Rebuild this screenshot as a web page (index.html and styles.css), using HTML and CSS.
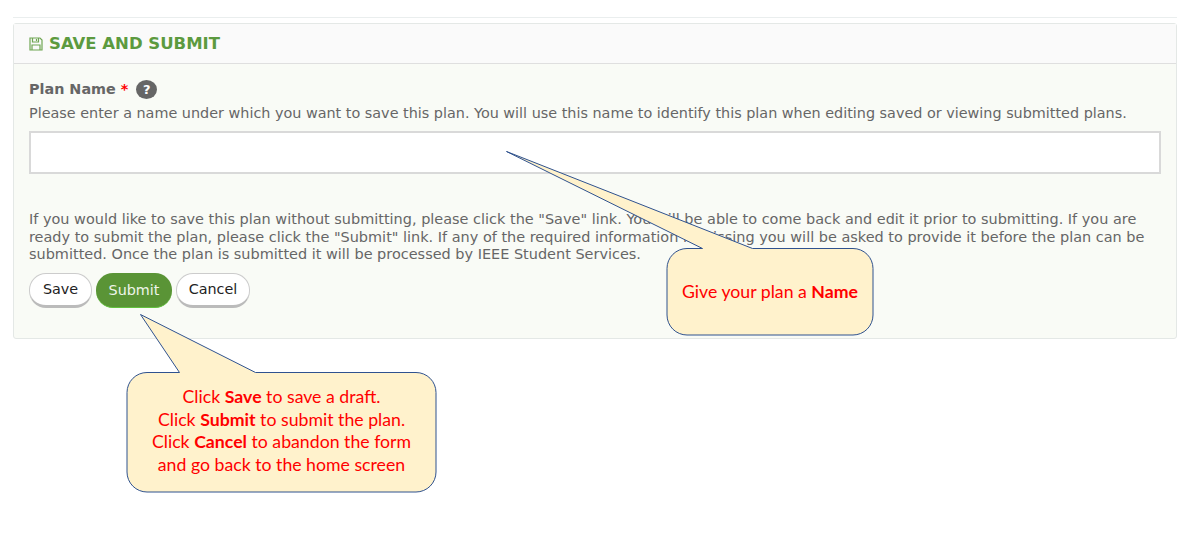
FILE: index.html
```html
<!DOCTYPE html>
<html lang="en">
<head>
  <meta charset="UTF-8" />
  <title>Save and Submit</title>
  <link rel="stylesheet" href="styles.css">
</head>
<body>
  <div class="top-rule"></div>

  <section class="panel">
    <header class="panel-head">
      <svg class="save-icon" width="14" height="14" viewBox="0 0 14 14" fill="none" stroke="#6fa653" stroke-width="1.2">
        <path d="M1 1h10l2 2v10H1z"/>
        <path d="M3.5 1v4h6V1M7.5 2v2"/>
        <path d="M3 13V8h8v5"/>
      </svg>
      <h2>SAVE AND SUBMIT</h2>
    </header>
    <div class="panel-body">
      <div class="label-row">
        <label for="planName">Plan Name</label>
        <span class="req">*</span>
        <span class="help">?</span>
      </div>
      <p class="hint">Please enter a name under which you want to save this plan. You will use this name to identify this plan when editing saved or viewing submitted plans.</p>
      <input type="text" id="planName" class="name-input" />
      <p class="note">If you would like to save this plan without submitting, please click the "Save" link. You will be able to come back and edit it prior to submitting. If you are ready to submit the plan, please click the "Submit" link. If any of the required information is missing you will be asked to provide it before the plan can be submitted. Once the plan is submitted it will be processed by IEEE Student Services.</p>
      <div class="actions">
        <button class="btn btn-save">Save</button>
        <button class="btn btn-submit">Submit</button>
        <button class="btn btn-cancel">Cancel</button>
      </div>
    </div>
  </section>

  <!-- callouts sit over the form -->
  <div class="callout callout-name">
    <svg width="369" height="186" viewBox="0 0 369 186">
      <path class="bubble" d="M0.5 0.5L246.5 97.5H347a20 20 0 0 1 20 20V164a20 20 0 0 1-20 20H181a20 20 0 0 1-20-20V117.5a20 20 0 0 1 20-20H196.5Z" />
    </svg>
    <div class="callout-text name-text">Give your plan a <b>Name</b></div>
  </div>

  <div class="callout callout-buttons">
    <svg width="298" height="180" viewBox="0 0 298 180">
      <path class="bubble" d="M0.5 0.5L115.5 58.5H276a20 20 0 0 1 20 20V158a20 20 0 0 1-20 20H7a20 20 0 0 1-20-20V78.5a20 20 0 0 1 20-20H39.5Z" />
    </svg>
    <div class="callout-text buttons-text">
      Click <b>Save</b> to save a draft.<br>
      Click <b>Submit</b> to submit the plan.<br>
      Click <b>Cancel</b> to abandon the form<br>
      and go back to the home screen
    </div>
  </div>
</body>
</html>
```

FILE: styles.css
```css
body {
  margin: 0;
  padding: 17px 24px 0 13px;
  font-family: "DejaVu Sans", Verdana, sans-serif;
  background-color: #fff;
  color: #666;
  position: relative;
  height: 535px;
  overflow: hidden;
}

.top-rule {
  height: 1px;
  background-color: #eaeeee;
  margin-bottom: 5px;
}

.panel {
  border: 1px solid #e4e8e6;
  border-radius: 3px;
  background-color: #f9fbf6;
  height: 314px;
}

.panel-head {
  display: flex;
  align-items: center;
  gap: 6px;
  height: 39px;
  padding-left: 15px;
  background-color: #fafafa;
  border-bottom: 1px solid #dfdfdf;
}

.panel-head h2 {
  margin: 0;
  font-size: 16.5px;
  font-weight: bold;
  color: #5c9a3f;
}

.panel-body {
  padding: 14px 15px 0;
}

.label-row {
  display: flex;
  align-items: center;
  gap: 5px;
  height: 22px;
  font-size: 14.37px;
  font-weight: bold;
}

.req {
  color: #f00;
}

.help {
  display: flex;
  align-items: center;
  justify-content: center;
  width: 21px;
  height: 19px;
  margin-left: 3px;
  border-radius: 50%;
  background-color: #666;
  color: #fff;
  font-size: 13px;
}

.hint {
  margin: 4px 0 0;
  font-size: 14.38px;
  line-height: 18px;
}

.name-input {
  display: block;
  box-sizing: border-box;
  width: 1132px;
  height: 43px;
  margin-top: 9px;
  border: 2px solid #d9d9d9;
  background-color: #fff;
}

.note {
  margin: 37px 0 0;
  font-size: 14.46px;
  line-height: 17.5px;
}

.actions {
  display: flex;
  gap: 4px;
  margin-top: 9px;
}

.btn {
  height: 35px;
  border-radius: 17px;
  font-family: inherit;
  font-size: 14.37px;
  padding: 0;
}

.btn-save,
.btn-cancel {
  background-color: #fff;
  color: #222;
  border: 1px solid #ccc;
  border-bottom: 3px solid #bbb;
}

.btn-save {
  width: 63px;
}

.btn-cancel {
  width: 74px;
}

.btn-submit {
  width: 76px;
  background-color: #5a9436;
  color: #eef5ea;
  border: none;
  border-bottom: 1px solid #62c23e;
}

.callout {
  position: absolute;
}

.callout svg {
  display: block;
  overflow: visible;
}

.bubble {
  fill: #fff2cc;
  stroke: #2f528f;
  stroke-width: 1;
}

.callout-name {
  left: 506px;
  top: 151px;
}

.callout-buttons {
  left: 140px;
  top: 314px;
}

.callout-text {
  position: absolute;
  font-family: Lato, "Open Sans", sans-serif;
  font-size: 17.7px;
  color: #f00;
  text-align: center;
}

.name-text {
  left: 161px;
  top: 97px;
  width: 206px;
  line-height: 87px;
}

.buttons-text {
  left: -13px;
  top: 72px;
  width: 309px;
  line-height: 22.7px;
}
```
